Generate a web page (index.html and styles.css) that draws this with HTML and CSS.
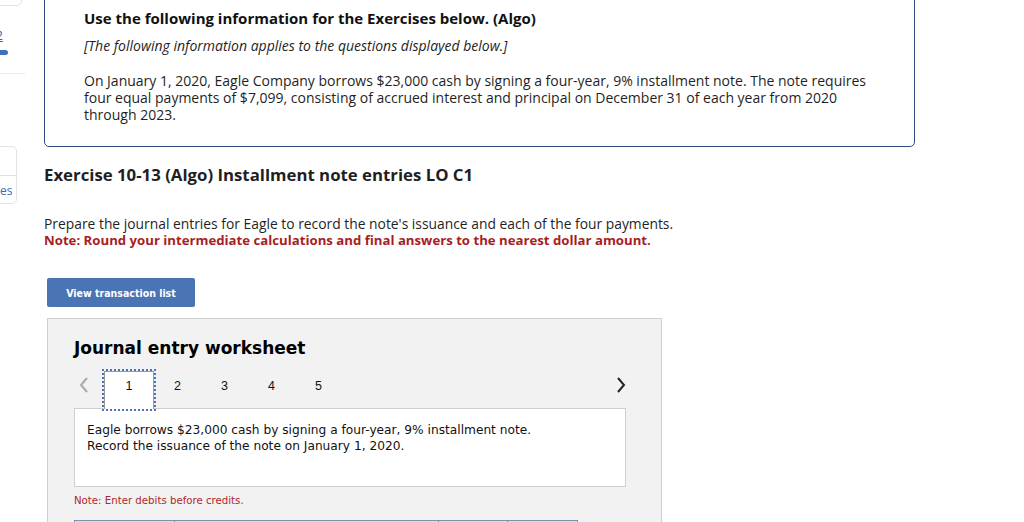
FILE: index.html
```html
<!DOCTYPE html>
<html lang="en">
  <head>
    <meta charset="UTF-8" />
    <meta name="viewport" content="width=device-width, initial-scale=1.0" />
    <title>Exercise 10-13</title>
    <link rel="stylesheet" href="styles.css">
  </head>
  <body>
    <div class="page">
      <aside class="side">
        <div class="side-card top"></div>
        <a class="side-link">2</a>
        <div class="side-progress"></div>
        <div class="side-rule"></div>
        <div class="side-card bottom">
          <div class="side-card-row"></div>
          <div class="side-card-row"><span>es</span></div>
        </div>
      </aside>

      <main class="main">
        <div class="info">
          <h2>Use the following information for the Exercises below. (Algo)</h2>
          <p class="applies">[The following information applies to the questions displayed below.]</p>
          <p>On January 1, 2020, Eagle Company borrows $23,000 cash by signing a four-year, 9% installment note. The note requires four equal payments of $7,099, consisting of accrued interest and principal on December 31 of each year from 2020 through 2023.</p>
        </div>

        <h3 class="exercise">Exercise 10-13 (Algo) Installment note entries LO C1</h3>

        <p class="prompt">Prepare the journal entries for Eagle to record the note's issuance and each of the four payments.</p>
        <p class="note">Note: Round your intermediate calculations and final answers to the nearest dollar amount.</p>

        <button class="btn">View transaction list</button>

        <div class="worksheet">
          <h4>Journal entry worksheet</h4>
          <div class="steps">
            <span class="arrow prev">
              <svg width="10" height="16" viewBox="0 0 10 16"><path d="M8 1 L2 8 L8 15" fill="none" stroke="#aaa" stroke-width="2"/></svg>
            </span>
            <span class="step active">1</span>
            <span class="step">2</span>
            <span class="step">3</span>
            <span class="step">4</span>
            <span class="step">5</span>
            <span class="arrow next">
              <svg width="10" height="16" viewBox="0 0 10 16"><path d="M2 1 L8 8 L2 15" fill="none" stroke="#222" stroke-width="2"/></svg>
            </span>
          </div>
          <div class="desc">
            <p>Eagle borrows $23,000 cash by signing a four-year, 9% installment note.</p>
            <p>Record the issuance of the note on January 1, 2020.</p>
          </div>
          <p class="debits">Note: Enter debits before credits.</p>
          <div class="table-head">
            <div></div><div></div><div></div><div></div>
          </div>
        </div>
      </main>
    </div>
  </body>
</html>
```

FILE: styles.css
```css
* {
  box-sizing: border-box;
}
body {
  margin: 0;
  background: #fff;
  font-family: "Open Sans", "Lato", sans-serif;
  color: #1f1f1f;
  overflow: hidden;
}
.page {
  display: flex;
  height: 522px;
}

/* left rail, mostly cut off */
.side {
  width: 74px;
  flex-shrink: 0;
  margin-left: -30px;
  display: flex;
  flex-direction: column;
}
.side-card {
  border: 1px solid #e2e2e2;
  border-radius: 5px;
  background: #fff;
}
.side-card.top {
  width: 52px;
  height: 14px;
  margin-top: -8px;
}
.side-link {
  margin: 23px 0 0 26px;
  font-size: 12px;
  color: #2f63b4;
  text-decoration: underline;
  line-height: 14px;
}
.side-progress {
  width: 8px;
  height: 5px;
  margin: 7px 0 0 30px;
  background: #3c72c2;
  border-radius: 0 3px 3px 0;
}
.side-rule {
  width: 55px;
  height: 1px;
  margin-top: 18px;
  background: #ebebeb;
}
.side-card.bottom {
  width: 47px;
  height: 58px;
  margin-top: 72px;
}
.side-card-row {
  height: 28px;
}
.side-card-row + .side-card-row {
  border-top: 1px solid #e2e2e2;
  font-size: 12px;
  color: #3a6ab8;
  padding: 6px 0 0 29px;
}

.main {
  flex: 1;
}

.info {
  width: 871px;
  margin-top: -12px;
  border: 1px solid #2e4b7f;
  border-radius: 0 0 5px 5px;
  padding: 20px 40px 23px 39px;
}
.info h2 {
  margin: 0;
  font-size: 15px;
  font-weight: 700;
  color: #111;
  line-height: 18px;
}
.info p {
  margin: 0;
  font-size: 14px;
  line-height: 17px;
}
.info .applies {
  font-style: italic;
  margin: 10px 0 18px;
}

.exercise {
  margin: 18px 0 0;
  font-size: 16.8px;
  font-weight: 700;
  line-height: 20px;
  color: #1f1f1f;
}
.prompt {
  margin: 30px 0 0;
  font-size: 13.85px;
  line-height: 17px;
}
.note {
  margin: 0;
  font-size: 13.2px;
  line-height: 17px;
  font-weight: 700;
  color: #a81d22;
}

.btn {
  display: block;
  margin: 29px 0 0 3px;
  width: 148px;
  height: 29px;
  border: 0;
  border-radius: 2px;
  background: #4a74b4;
  color: #fff;
  font-family: "DejaVu Sans Condensed", "DejaVu Sans", sans-serif;
  font-size: 10.5px;
  font-weight: 700;
  padding: 0;
}

.worksheet {
  width: 615px;
  height: 220px;
  margin: 11px 0 0 3px;
  background: #f2f2f2;
  border: 1px solid #cfcfcf;
  padding: 0 35px 0 26px;
  font-family: "DejaVu Sans", Verdana, sans-serif;
}
.worksheet h4 {
  margin: 18px 0 0;
  font-size: 17px;
  font-weight: 700;
  color: #000;
  line-height: 22px;
}
.steps {
  display: flex;
  align-items: flex-start;
  margin-top: 11px;
  height: 40px;
  font-family: "Liberation Sans", Arial, sans-serif;
  font-size: 12.5px;
  color: #111;
}
.arrow {
  display: flex;
  padding-top: 7px;
}
.arrow.prev {
  padding-left: 5px;
  width: 30px;
}
.arrow.next {
  margin-left: auto;
}
.step {
  width: 47px;
  height: 40px;
  padding-top: 9px;
  text-align: center;
}
.step.active {
  width: 50px;
  margin: 1px 0 0 0;
  height: 38px;
  padding-top: 7px;
  background: #fff;
  border: 1px solid #9a9a9a;
  border-bottom: 0;
  outline: 2px dotted #4a74b4;
  outline-offset: 0;
  position: relative;
  z-index: 1;
}
.desc {
  margin-top: -2px;
  width: 552px;
  height: 79px;
  background: #fff;
  border: 1px solid #cfcfcf;
  padding: 13px 12px;
  font-size: 12.2px;
  line-height: 16px;
  color: #111;
}
.desc p {
  margin: 0;
}
.debits {
  margin: 7px 0 0;
  font-size: 10.2px;
  color: #b0262b;
  line-height: 14px;
}
.table-head {
  display: grid;
  grid-template-columns: 101px 264px 69px 70px;
  margin-top: 12px;
  height: 20px;
  width: 504px;
}
.table-head div {
  background: #d3deeb;
  border: 1px solid #7c91b0;
  border-left: 0;
}
.table-head div:first-child {
  border-left: 1px solid #7c91b0;
}
```
